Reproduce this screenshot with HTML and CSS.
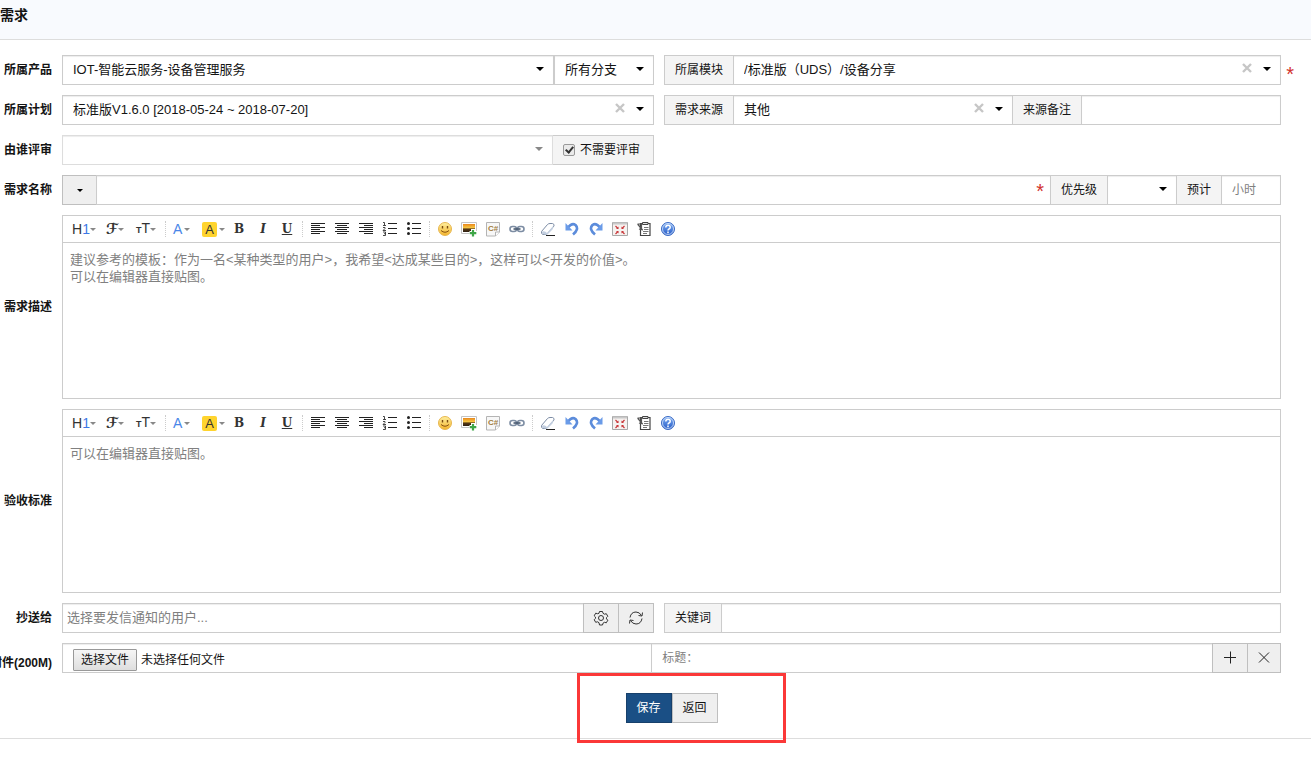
FILE: index.html
```html
<!DOCTYPE html>
<html lang="zh-CN">

<head>
    <meta charset="UTF-8">
    <meta name="viewport" content="width=device-width, initial-scale=1.0">
    <title>需求</title>
    <link rel="stylesheet" href="styles.css">
</head>

<body>

    <!-- Icons shared by both editors -->
    <svg class="sprite" aria-hidden="true">
        <defs>
            <linearGradient id="gold" x1="0" y1="0" x2="0" y2="1">
                <stop offset="0" stop-color="#fff0a0"/>
                <stop offset="1" stop-color="#f3b42c"/>
            </linearGradient>
            <linearGradient id="sunset" x1="0" y1="0" x2="0" y2="1">
                <stop offset="0" stop-color="#e8861c"/>
                <stop offset="0.5" stop-color="#f7cb45"/>
                <stop offset="0.6" stop-color="#5a3a14"/>
                <stop offset="1" stop-color="#2d2013"/>
            </linearGradient>
            <linearGradient id="blue" x1="0" y1="0" x2="0" y2="1">
                <stop offset="0" stop-color="#7fb0f5"/>
                <stop offset="1" stop-color="#2358c4"/>
            </linearGradient>
        </defs>
        <symbol id="i-left" viewBox="0 0 16 16">
            <path d="M1 2.5h14M1 4.5h9M1 6.5h14M1 8.5h9M1 10.5h14M1 12.5h9" stroke="#222"/>
        </symbol>
        <symbol id="i-center" viewBox="0 0 16 16">
            <path d="M1 2.5h14M3 4.5h10M1 6.5h14M3 8.5h10M1 10.5h14M3 12.5h10" stroke="#222"/>
        </symbol>
        <symbol id="i-right" viewBox="0 0 16 16">
            <path d="M1 2.5h14M6 4.5h9M1 6.5h14M6 8.5h9M1 10.5h14M6 12.5h9" stroke="#222"/>
        </symbol>
        <symbol id="i-ol" viewBox="0 0 16 16">
            <path d="M6 2.5h9M6 7.5h9M6 12.5h9" stroke="#222"/>
            <path d="M1 1.5h1.500v3M1 4.500h3M1 6.500h2v1L1 9.500h3M1 11h2.500v3.500H1M2 12.700h1.500" stroke="#333" fill="none" stroke-width=".9"/>
        </symbol>
        <symbol id="i-ul" viewBox="0 0 16 16">
            <path d="M6 2.5h9M6 7.5h9M6 12.5h9" stroke="#222"/>
            <circle cx="2.500" cy="2.500" r="1.500" fill="#222"/>
            <circle cx="2.500" cy="7.500" r="1.500" fill="#222"/>
            <circle cx="2.500" cy="12.500" r="1.500" fill="#222"/>
        </symbol>
        <symbol id="i-smile" viewBox="0 0 16 16">
            <circle cx="8" cy="8" r="6.500" fill="url(#gold)" stroke="#e8b750"/>
            <path d="M5.500 5v2.500M10.500 5v2.500" stroke="#7a4a10" stroke-width="1.400"/>
            <path d="M4 9.500q4 3.500 8 0" fill="none" stroke="#8a5210"/>
        </symbol>
        <symbol id="i-image" viewBox="0 0 16 16">
            <path d="M.5 1.500h15v11H.5z" fill="#fff" stroke="#c4c4c4"/>
            <path d="M2 3h12v8H2z" fill="url(#sunset)"/>
            <path d="M12 8v7.500M8.500 12h7.500" stroke="#fff" stroke-width="4"/>
            <path d="M12 9v6.500M8.800 12.200h6.500" stroke="#3fa648" stroke-width="2.200"/>
        </symbol>
        <symbol id="i-sheet" viewBox="0 0 16 16">
            <path d="M1.500 1.500h13v9.500l-4 4h-9z" fill="#f7f7f7" stroke="#b4b4b4"/>
            <path d="M10.500 15v-4h4" fill="#fff" stroke="#b4b4b4"/>
        </symbol>
        <symbol id="i-link" viewBox="0 0 16 16">
            <rect x="1" y="5.500" width="6.500" height="5" rx="2.500" fill="none" stroke="#7d8da3" stroke-width="1.600"/>
            <rect x="8.500" y="5.500" width="6.500" height="5" rx="2.500" fill="none" stroke="#7d8da3" stroke-width="1.600"/>
            <path d="M4.500 8h7" stroke="#46586e" stroke-width="1.600"/>
        </symbol>
        <symbol id="i-eraser" viewBox="0 0 16 16">
            <path d="M1.500 10.500l6-7q1-1 2.500-1h2.500q2 .5 1.500 2.500l-6.500 7.500q-1 1-2.500 1h-2q-2-.5-1.500-3z" fill="#fff" stroke="#7c8ca5"/>
            <path d="M2 10.500q3-1 5 1.500l6.500-7.500-1 4-5 5h-3q-2.500 0-2.500-3z" fill="#c3cfe0"/>
            <path d="M6 14.500h9" stroke="#222"/>
        </symbol>
        <symbol id="i-undo" viewBox="0 0 16 16">
            <path d="M4 6.500q4-5 7.500-2.500 4 4-2.500 9.500" fill="none" stroke="#5c8cdb" stroke-width="2.600"/>
            <path d="M1.500 2v7.500h7z" fill="#6a9be8"/>
        </symbol>
        <symbol id="i-redo" viewBox="0 0 16 16">
            <path d="M12 6.500q-4-5-7.500-2.500-4 4 2.500 9.500" fill="none" stroke="#5c8cdb" stroke-width="2.600"/>
            <path d="M14.500 2v7.500h-7z" fill="#6a9be8"/>
        </symbol>
        <symbol id="i-full" viewBox="0 0 16 16">
            <path d="M.5 1.500h15v13H.5z" fill="#f6f2f0" stroke="#a8a8a8"/>
            <path d="M1 2.500h14" stroke="#c8c8c8" stroke-width="2"/>
            <path d="M6.500 8V5.500L4 8zM9.500 8V5.500L12 8zM6.500 10v2.500L4 10zM9.500 10v2.500l2.500-2.500z" fill="#c9393b"/>
            <path d="M3.500 5l2.500 2.500M12.500 5L10 7.500M3.500 13L6 10.500M12.500 13L10 10.500" stroke="#c9393b" stroke-width="1.200"/>
        </symbol>
        <symbol id="i-paste" viewBox="0 0 16 16">
            <path d="M4.500 2.500h9.500v12H4.500z" fill="#fff" stroke="#444" stroke-width="1.200"/>
            <path d="M6.500 1.500h5.500v2H6.500z" fill="#ddd" stroke="#444"/>
            <path d="M8 6.500h4.500M8 8.500h4.500M7 10.500h5.500M7 12.500h4" stroke="#777"/>
            <path d="M1.500 3h4v6M1.500 3l5 6M3 8l4 1" fill="none" stroke="#555" stroke-width="1.200"/>
        </symbol>
        <symbol id="i-help" viewBox="0 0 16 16">
            <circle cx="8" cy="8" r="6.500" fill="url(#blue)" stroke="#3b6bc4"/>
            <circle cx="8" cy="8" r="5.500" fill="none" stroke="#d5e4fb" stroke-width=".8"/>
            <path d="M5.800 6.500q0-2.300 2.200-2.300t2.200 2q0 1.200-1.200 1.800-1 .5-1 1.500M8 10.500v1.800" fill="none" stroke="#fff" stroke-width="1.500"/>
        </symbol>
        <symbol id="i-clear" viewBox="0 0 10 10">
            <path d="M1 1l8 8M9 1L1 9" stroke="#c6c6c6" stroke-width="2.400"/>
        </symbol>
    </svg>

    <header class="page-header">
        <h1>需求</h1>
    </header>

    <form class="story-form">
        <!-- 所属产品 -->
        <div class="row">
            <label class="row-label" for="product">所属产品</label>
            <div class="row-body halves">
                <div class="group">
                    <div class="picker grow">
                        <select id="product"><option>IOT-智能云服务-设备管理服务</option></select>
                    </div>
                    <div class="picker branch">
                        <select aria-label="分支"><option>所有分支</option></select>
                    </div>
                </div>
                <div class="group required">
                    <label class="addon" for="module">所属模块</label>
                    <div class="picker grow">
                        <select id="module"><option>/标准版（UDS）/设备分享</option></select>
                        <button type="button" class="clear" aria-label="清除"><svg><use href="#i-clear"/></svg></button>
                    </div>
                </div>
            </div>
        </div>

        <!-- 所属计划 -->
        <div class="row">
            <label class="row-label" for="plan">所属计划</label>
            <div class="row-body halves">
                <div class="group">
                    <div class="picker grow">
                        <select id="plan"><option>标准版V1.6.0 [2018-05-24 ~ 2018-07-20]</option></select>
                        <button type="button" class="clear" aria-label="清除"><svg><use href="#i-clear"/></svg></button>
                    </div>
                </div>
                <div class="group">
                    <label class="addon" for="source">需求来源</label>
                    <div class="picker source">
                        <select id="source"><option>其他</option></select>
                        <button type="button" class="clear" aria-label="清除"><svg><use href="#i-clear"/></svg></button>
                    </div>
                    <label class="addon" for="sourceNote">来源备注</label>
                    <input type="text" id="sourceNote" class="source-note">
                </div>
            </div>
        </div>

        <!-- 由谁评审 -->
        <div class="row">
            <label class="row-label" for="reviewer">由谁评审</label>
            <div class="row-body halves">
                <div class="group">
                    <div class="picker grow disabled">
                        <select id="reviewer" disabled><option></option></select>
                    </div>
                    <label class="addon check">
                        <input type="checkbox" checked>
                        不需要评审
                    </label>
                </div>
            </div>
        </div>

        <!-- 需求名称 -->
        <div class="row">
            <label class="row-label" for="title">需求名称</label>
            <div class="row-body group">
                <button type="button" class="btn color-btn" aria-label="颜色"><span class="caret"></span></button>
                <div class="title-box grow">
                    <input type="text" id="title">
                </div>
                <label class="addon" for="pri">优先级</label>
                <div class="picker pri">
                    <select id="pri"><option></option></select>
                </div>
                <label class="addon" for="estimate">预计</label>
                <input type="text" id="estimate" class="estimate" placeholder="小时">
            </div>
        </div>

        <!-- 需求描述 -->
        <div class="row">
            <label class="row-label" for="spec">需求描述</label>
            <div class="row-body editor">
                <div class="toolbar">
                    <button type="button" class="tool wide" aria-label="段落"><span class="heading">H<b>1</b></span><i class="drop"></i></button>
                    <button type="button" class="tool mid" aria-label="字体"><span class="script">ℱ</span><i class="drop"></i></button>
                    <button type="button" class="tool mid" aria-label="文字大小"><span class="sizes"><small>T</small>T</span><i class="drop"></i></button>
                    <span class="sep"></span>
                    <button type="button" class="tool color" aria-label="文字颜色"><span class="fore">A</span><i class="drop"></i></button>
                    <button type="button" class="tool color" aria-label="文字背景"><span class="back">A</span><i class="drop"></i></button>
                    <button type="button" class="tool serif" aria-label="粗体">B</button>
                    <button type="button" class="tool serif italic" aria-label="斜体">I</button>
                    <button type="button" class="tool serif under" aria-label="下划线">U</button>
                    <span class="sep"></span>
                    <button type="button" class="tool" aria-label="左对齐"><svg><use href="#i-left"/></svg></button>
                    <button type="button" class="tool" aria-label="居中"><svg><use href="#i-center"/></svg></button>
                    <button type="button" class="tool" aria-label="右对齐"><svg><use href="#i-right"/></svg></button>
                    <button type="button" class="tool" aria-label="编号"><svg><use href="#i-ol"/></svg></button>
                    <button type="button" class="tool" aria-label="项目符号"><svg><use href="#i-ul"/></svg></button>
                    <span class="sep"></span>
                    <button type="button" class="tool" aria-label="表情"><svg><use href="#i-smile"/></svg></button>
                    <button type="button" class="tool" aria-label="图片"><svg><use href="#i-image"/></svg></button>
                    <button type="button" class="tool" aria-label="代码"><svg><use href="#i-sheet"/><text x="3" y="10" class="code-mark">C#</text></svg></button>
                    <button type="button" class="tool" aria-label="超链接"><svg><use href="#i-link"/></svg></button>
                    <span class="sep"></span>
                    <button type="button" class="tool" aria-label="删除格式"><svg><use href="#i-eraser"/></svg></button>
                    <button type="button" class="tool" aria-label="后退"><svg><use href="#i-undo"/></svg></button>
                    <button type="button" class="tool" aria-label="前进"><svg><use href="#i-redo"/></svg></button>
                    <button type="button" class="tool" aria-label="全屏"><svg><use href="#i-full"/></svg></button>
                    <button type="button" class="tool" aria-label="粘贴"><svg><use href="#i-paste"/></svg></button>
                    <button type="button" class="tool" aria-label="帮助"><svg><use href="#i-help"/></svg></button>
                </div>
                <textarea id="spec" placeholder="建议参考的模板：作为一名&lt;某种类型的用户&gt;，我希望&lt;达成某些目的&gt;，这样可以&lt;开发的价值&gt;。&#10;可以在编辑器直接贴图。"></textarea>
            </div>
        </div>

        <!-- 验收标准 -->
        <div class="row">
            <label class="row-label" for="verify">验收标准</label>
            <div class="row-body editor">
                <div class="toolbar">
                    <button type="button" class="tool wide" aria-label="段落"><span class="heading">H<b>1</b></span><i class="drop"></i></button>
                    <button type="button" class="tool mid" aria-label="字体"><span class="script">ℱ</span><i class="drop"></i></button>
                    <button type="button" class="tool mid" aria-label="文字大小"><span class="sizes"><small>T</small>T</span><i class="drop"></i></button>
                    <span class="sep"></span>
                    <button type="button" class="tool color" aria-label="文字颜色"><span class="fore">A</span><i class="drop"></i></button>
                    <button type="button" class="tool color" aria-label="文字背景"><span class="back">A</span><i class="drop"></i></button>
                    <button type="button" class="tool serif" aria-label="粗体">B</button>
                    <button type="button" class="tool serif italic" aria-label="斜体">I</button>
                    <button type="button" class="tool serif under" aria-label="下划线">U</button>
                    <span class="sep"></span>
                    <button type="button" class="tool" aria-label="左对齐"><svg><use href="#i-left"/></svg></button>
                    <button type="button" class="tool" aria-label="居中"><svg><use href="#i-center"/></svg></button>
                    <button type="button" class="tool" aria-label="右对齐"><svg><use href="#i-right"/></svg></button>
                    <button type="button" class="tool" aria-label="编号"><svg><use href="#i-ol"/></svg></button>
                    <button type="button" class="tool" aria-label="项目符号"><svg><use href="#i-ul"/></svg></button>
                    <span class="sep"></span>
                    <button type="button" class="tool" aria-label="表情"><svg><use href="#i-smile"/></svg></button>
                    <button type="button" class="tool" aria-label="图片"><svg><use href="#i-image"/></svg></button>
                    <button type="button" class="tool" aria-label="代码"><svg><use href="#i-sheet"/><text x="3" y="10" class="code-mark">C#</text></svg></button>
                    <button type="button" class="tool" aria-label="超链接"><svg><use href="#i-link"/></svg></button>
                    <span class="sep"></span>
                    <button type="button" class="tool" aria-label="删除格式"><svg><use href="#i-eraser"/></svg></button>
                    <button type="button" class="tool" aria-label="后退"><svg><use href="#i-undo"/></svg></button>
                    <button type="button" class="tool" aria-label="前进"><svg><use href="#i-redo"/></svg></button>
                    <button type="button" class="tool" aria-label="全屏"><svg><use href="#i-full"/></svg></button>
                    <button type="button" class="tool" aria-label="粘贴"><svg><use href="#i-paste"/></svg></button>
                    <button type="button" class="tool" aria-label="帮助"><svg><use href="#i-help"/></svg></button>
                </div>
                <textarea id="verify" placeholder="可以在编辑器直接贴图。"></textarea>
            </div>
        </div>

        <!-- 抄送给 -->
        <div class="row">
            <label class="row-label" for="mailto">抄送给</label>
            <div class="row-body halves">
                <div class="group">
                    <input type="text" id="mailto" class="mailto grow" placeholder="选择要发信通知的用户...">
                    <button type="button" class="btn icon-btn" aria-label="设置">
                        <svg viewBox="0 0 16 16" fill="none" stroke="#333">
                            <path d="M6.500 1.500h3l.5 1.800 1.500.9 1.800-.5 1.500 2.600-1.300 1.300v1.300l1.300 1.300-1.500 2.600-1.800-.5-1.500.9-.5 1.800h-3L6 12.700l-1.500-.9-1.800.5-1.500-2.600 1.300-1.300V7.100L1.200 5.800l1.500-2.600 1.800.5L6 3.300z"/>
                            <circle cx="8" cy="8" r="2.500"/>
                        </svg>
                    </button>
                    <button type="button" class="btn icon-btn" aria-label="刷新">
                        <svg viewBox="0 0 16 16" fill="none" stroke="#333">
                            <path d="M2 7.500Q3 2 8 2q3.500 0 5.500 3.500M14 8.500Q13 14 8 14q-3.500 0-5.500-3.500M14.500 2.500L14 6l-3.500-.5M1.500 13.500L2 10l3.500.5"/>
                        </svg>
                    </button>
                </div>
                <div class="group">
                    <label class="addon" for="keywords">关键词</label>
                    <input type="text" id="keywords" class="grow">
                </div>
            </div>
        </div>

        <!-- 附件 -->
        <div class="row">
            <label class="row-label low" for="file">附件(200M)</label>
            <div class="row-body group">
                <label class="file-box">
                    <input type="file" id="file">
                    <span class="file-btn">选择文件</span>
                    <span>未选择任何文件</span>
                </label>
                <input type="text" class="file-title" aria-label="标题" placeholder="标题：">
                <button type="button" class="btn icon-btn" aria-label="添加">
                    <svg viewBox="0 0 16 16" fill="none" stroke="#222"><path d="M2 7.500h12M8.500 1.500v12"/></svg>
                </button>
                <button type="button" class="btn icon-btn remove" aria-label="删除">
                    <svg viewBox="0 0 16 16" fill="none" stroke="#222"><path d="M3 2.500l10 10M13 2.500l-10 10"/></svg>
                </button>
            </div>
        </div>

        <!-- 保存 / 返回 -->
        <div class="actions">
            <div class="action-group">
                <button type="submit" class="btn primary">保存</button>
                <button type="button" class="btn">返回</button>
            </div>
        </div>
    </form>

</body>

</html>
```

FILE: styles.css
```css
*,
*::before,
*::after {
    box-sizing: border-box;
}

body {
    min-height: 100vh;
    margin: 0;
    background: #fff;
    color: #141414;
    font: 12px/18px "Liberation Sans", "Noto Sans CJK SC", sans-serif;
}

input,
select,
textarea,
button {
    margin: 0;
    border: 1px solid #ccc;
    border-radius: 0;
    background: #fff;
    color: #141414;
    font: inherit;
}

.sprite {
    position: absolute;
    width: 0;
    height: 0;
}

/* Header */
.page-header {
    height: 40px;
    padding-top: 5px;
    background: #f8fafe;
    border-bottom: 1px solid #ddd;
}

.page-header h1 {
    margin: 0;
    font-size: 14px;
    line-height: 20px;
}

/* Form rows */
.story-form {
    display: flex;
    flex-direction: column;
    gap: 10px;
    padding-top: 15px;
    border-bottom: 1px solid #ddd;
}

.row {
    display: flex;
    gap: 10px;
    padding-right: 30px;
}

.row-label {
    display: flex;
    align-items: center;
    justify-content: flex-end;
    width: 52px;
    font-weight: bold;
    white-space: nowrap;
}

.row-label.low {
    padding-top: 10px;
}

.row-body {
    flex: 1;
    min-width: 0;
}

.halves {
    display: grid;
    grid-template-columns: 592fr 617fr;
    gap: 10px;
}

/* Joined controls share one border */
.group {
    position: relative;
    display: flex;
    height: 30px;
}

.group > * + * {
    margin-left: -1px;
}

.grow {
    flex: 1;
    min-width: 0;
}

.group input[type="text"] {
    height: 30px;
    padding: 0 10px;
    box-shadow: inset 0 1px 1px rgba(0, 0, 0, 0.075);
}

input::placeholder,
textarea::placeholder {
    color: #808080;
    opacity: 1;
}

.addon {
    display: flex;
    align-items: center;
    padding: 0 10px;
    background: #f4f4f4;
    border: 1px solid #ccc;
    white-space: nowrap;
}

.check {
    gap: 5px;
    padding-right: 13px;
}

.check input {
    width: 12px;
    height: 12px;
    appearance: none;
    border: 1px solid #999;
    border-radius: 2px;
    background: #eaeaea;
}

.check input:checked::after {
    content: "";
    display: block;
    width: 5px;
    height: 8px;
    margin-left: 3px;
    border: solid #333;
    border-width: 0 2px 2px 0;
    transform: rotate(40deg);
}

/* Drop-downs */
.picker {
    position: relative;
}

.picker select {
    display: block;
    width: 100%;
    height: 30px;
    padding: 0 26px 0 10px;
    appearance: none;
    font-size: 13px;
    opacity: 1;
    box-shadow: inset 0 1px 1px rgba(0, 0, 0, 0.075);
}

.picker::after {
    content: "";
    position: absolute;
    top: 12px;
    right: 10px;
    border: 4px solid transparent;
    border-top-color: #000;
    border-bottom: 0;
    pointer-events: none;
}

.picker.disabled select {
    border-color: #ddd;
}

.picker.disabled::after {
    border-top-color: #888;
}

.clear {
    position: absolute;
    top: 8px;
    right: 29px;
    width: 10px;
    height: 10px;
    padding: 0;
    border: 0;
    background: none;
}

.clear svg {
    display: block;
    width: 10px;
    height: 10px;
}

.group > .branch {
    width: 100px;
    margin-left: 0;
}

.source {
    flex: 11;
}

.source-note {
    flex: 7;
    min-width: 0;
}

.pri {
    width: 70px;
}

.estimate {
    width: 60px;
}

.required::after,
.title-box::after {
    content: "*";
    position: absolute;
    top: 7px;
    right: -13px;
    color: #d2322d;
    font-size: 20px;
    line-height: 24px;
}

.title-box {
    position: relative;
}

.title-box::after {
    top: 4px;
    right: 7px;
}

.title-box input {
    width: 100%;
}

/* Buttons */
.btn {
    height: 30px;
    padding: 0 9px;
    background: #efefef;
    border-color: #bfbfbf;
    cursor: pointer;
}

.btn.primary {
    background: #1a4f85;
    border-color: #17406b;
    color: #fff;
}

.icon-btn {
    width: 36px;
}

.icon-btn.remove {
    width: 34px;
    padding: 0 8px;
}

.color-btn {
    display: flex;
    align-items: center;
    justify-content: center;
    width: 35px;
}

.icon-btn svg {
    display: block;
    width: 16px;
    height: 16px;
}

.caret {
    border: 3px solid transparent;
    border-top-color: #000;
    border-bottom: 0;
}

/* Rich text editor */
.editor {
    border: 1px solid #ccc;
}

.toolbar {
    display: flex;
    align-items: center;
    height: 27px;
    padding-left: 5px;
    border-bottom: 1px solid #ccc;
}

.tool {
    display: flex;
    align-items: center;
    justify-content: center;
    width: 24px;
    height: 24px;
    padding: 0;
    border: 0;
    background: none;
    color: #333;
}

.tool svg {
    width: 16px;
    height: 16px;
}

.tool.wide,
.tool.mid,
.tool.color {
    justify-content: flex-start;
    padding-left: 4px;
}

.tool.wide {
    width: 34px;
}

.tool.mid {
    width: 30px;
}

.tool.color {
    gap: 2px;
    width: 29px;
}

.heading,
.sizes,
.fore {
    font-size: 14px;
}

.heading b {
    color: #3c78e6;
    font-weight: normal;
}

.script {
    font: bold 15px/16px "DejaVu Sans", sans-serif;
}

.sizes small {
    font-size: 9px;
    font-weight: bold;
}

.fore {
    color: #4a86e8;
}

.back {
    width: 15px;
    height: 15px;
    border-radius: 2px;
    background: #ffd42e;
    font-size: 13px;
    line-height: 15px;
}

.drop {
    border: 3px solid transparent;
    border-top-color: #888;
    border-bottom: 0;
}

.serif {
    font: bold 12px/16px "DejaVu Serif", serif;
}

.italic {
    font-style: italic;
}

.under {
    text-decoration: underline;
}

.sep {
    height: 16px;
    margin: 0 3px;
    border-left: 1px dotted #ccc;
}

.code-mark {
    fill: #a07c3c;
    font: bold 8px "Liberation Sans", sans-serif;
}

.editor textarea {
    display: block;
    width: 100%;
    height: 155px;
    padding: 8px 7px;
    border: 0;
    resize: none;
    font-size: 13px;
    line-height: 17px;
}

/* Mail and attachments */
.group input.mailto {
    padding: 0 4px 2px;
    font-size: 13px;
}

.file-box {
    position: relative;
    display: flex;
    flex: 20;
    align-items: center;
    gap: 4px;
    padding: 4px 10px 0;
    border: 1px solid #ccc;
    box-shadow: inset 0 1px 1px rgba(0, 0, 0, 0.075);
}

.file-box input {
    position: absolute;
    width: 64px;
    height: 22px;
    opacity: 0;
}

.file-btn {
    padding: 1px 7px;
    border: 1px solid #999;
    border-radius: 1px;
    background: linear-gradient(#f6f6f6, #dedede);
}

.file-title {
    flex: 19;
    min-width: 0;
}

/* Save / back */
.actions {
    display: flex;
    justify-content: center;
    padding: 10px 30px 15px 62px;
}

.action-group {
    position: relative;
    display: flex;
}

.action-group .btn {
    width: 46px;
}

.action-group::after {
    content: "";
    position: absolute;
    top: -20px;
    left: -49px;
    width: 209px;
    height: 70px;
    border: 3px solid #fb3838;
    pointer-events: none;
}
```
